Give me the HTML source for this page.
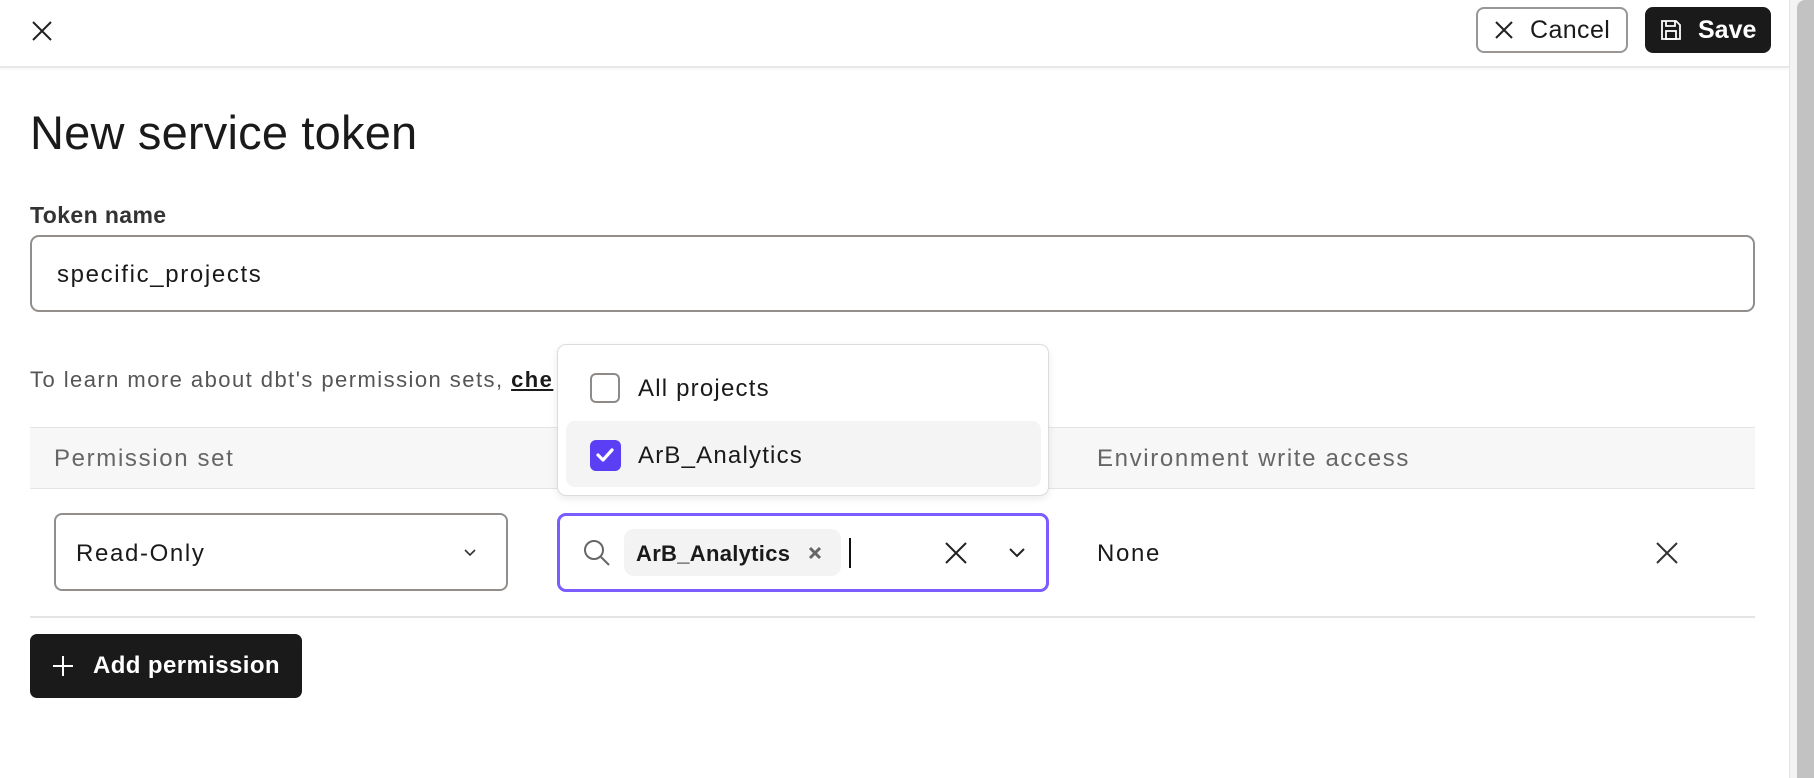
<!DOCTYPE html>
<html><head><meta charset="utf-8"><style>
*{box-sizing:border-box;margin:0;padding:0}
body{width:1814px;height:778px;overflow:hidden;background:#fff;font-family:"Liberation Sans",Arial,sans-serif;color:#1a1a1a;position:relative}
.abs{position:absolute}
.hdr{left:0;top:0;width:1789px;height:68px;border-bottom:2px solid #e8e8e8;box-shadow:0 1px 3px rgba(0,0,0,.05)}
.sb{left:1789px;top:0;width:25px;height:778px;background:#f3f3f3;border-left:1px solid #e2e2e2}
.thumb{left:1797px;top:0;width:17px;height:778px;background:#c2c2c2;border-radius:8px 0 0 0}
.btn{display:flex;align-items:center;font-size:25px;font-weight:bold;border-radius:8px}
.t{font-size:24px;letter-spacing:1.65px}
</style></head><body>
<div class="abs hdr"></div>
<div class="abs sb"></div><div class="abs thumb"></div>
<svg class="abs" style="left:31px;top:20px" width="22" height="22" viewBox="0 0 22 22"><path d="M2 2L20 20M20 2L2 20" stroke="#222" stroke-width="2"/></svg>
<div class="abs btn" style="left:1476px;top:7px;width:152px;height:46px;border:2px solid #9a9693;color:#1a1a1a">
<svg style="margin-left:16px" width="20" height="20" viewBox="0 0 20 20"><path d="M2 2L18 18M18 2L2 18" stroke="#222" stroke-width="2"/></svg><span style="margin-left:16px;font-weight:500;letter-spacing:.4px">Cancel</span></div>
<div class="abs btn" style="left:1645px;top:7px;width:126px;height:46px;background:#1a1a1a;color:#fff">
<svg style="margin-left:15px" width="22" height="22" viewBox="0 0 22 22" fill="none" stroke="#fff" stroke-width="1.8"><path d="M2 2h14l4 4v14H2z"/><path d="M6 2v5h9V2"/><rect x="6" y="12" width="10" height="8"/></svg><span style="margin-left:16px">Save</span></div>

<div class="abs" style="left:30px;top:105px;font-size:47px;font-weight:500;color:#1a1a1a;letter-spacing:.2px">New service token</div>
<div class="abs" style="left:30px;top:202px;font-size:23px;font-weight:bold;color:#333;letter-spacing:.4px">Token name</div>
<div class="abs" style="left:30px;top:235px;width:1725px;height:77px;border:2px solid #918e8c;border-radius:9px"></div>
<div class="abs t" style="left:57px;top:261px">specific_projects</div>
<div class="abs" style="left:30px;top:367px;font-size:22px;color:#555;letter-spacing:1.45px">To learn more about dbt's permission sets, <span style="color:#1a1a1a;font-weight:bold;text-decoration:underline">che</span></div>

<div class="abs" style="left:30px;top:427px;width:1725px;height:62px;background:#f7f7f7;border-top:1px solid #e4e4e4;border-bottom:1px solid #e4e4e4"></div>
<div class="abs t" style="left:54px;top:445px;color:#666">Permission set</div>
<div class="abs t" style="left:1097px;top:445px;color:#666">Environment write access</div>
<div class="abs" style="left:30px;top:616px;width:1725px;height:2px;background:#e4e4e4"></div>

<div class="abs" style="left:54px;top:513px;width:454px;height:78px;border:2px solid #918e8c;border-radius:8px"></div>
<div class="abs t" style="left:76px;top:540px;font-weight:500">Read-Only</div>
<svg class="abs" style="left:463px;top:548px" width="14" height="10" viewBox="0 0 14 10"><path d="M2 2l5 5 5-5" stroke="#333" stroke-width="1.6" fill="none"/></svg>

<div class="abs" style="left:557px;top:513px;width:492px;height:79px;border:3px solid #7a5cff;border-radius:9px"></div>
<svg class="abs" style="left:582px;top:538px" width="30" height="30" viewBox="0 0 30 30" fill="none" stroke="#666" stroke-width="2"><circle cx="12" cy="12" r="9"/><path d="M19 19l8 8"/></svg>
<div class="abs" style="left:624px;top:529px;width:217px;height:47px;background:#f3f3f3;border-radius:10px"></div>
<div class="abs" style="left:636px;top:541px;font-size:22px;font-weight:bold;letter-spacing:.3px">ArB_Analytics</div>
<svg class="abs" style="left:808px;top:546px" width="14" height="14" viewBox="0 0 14 14"><path d="M2 2l10 10M12 2L2 12" stroke="#666" stroke-width="3"/></svg>
<div class="abs" style="left:849px;top:538px;width:2px;height:30px;background:#111"></div>
<svg class="abs" style="left:945px;top:542px" width="22" height="22" viewBox="0 0 22 22"><path d="M1 1l20 20M21 1L1 21" stroke="#222" stroke-width="2"/></svg>
<svg class="abs" style="left:1008px;top:547px" width="18" height="12" viewBox="0 0 18 12"><path d="M2 2l7 7 7-7" stroke="#222" stroke-width="2" fill="none"/></svg>

<div class="abs t" style="left:1097px;top:540px">None</div>
<svg class="abs" style="left:1656px;top:542px" width="22" height="22" viewBox="0 0 22 22"><path d="M1 1l20 20M21 1L1 21" stroke="#333" stroke-width="2"/></svg>

<div class="abs btn" style="left:30px;top:634px;width:272px;height:64px;background:#1a1a1a;color:#fff;border-radius:7px;font-size:24px">
<svg style="margin-left:22px" width="22" height="22" viewBox="0 0 22 22"><path d="M11 1v20M1 11h20" stroke="#fff" stroke-width="2"/></svg><span style="margin-left:19px;letter-spacing:.4px">Add permission</span></div>

<div class="abs" style="left:557px;top:344px;width:492px;height:152px;background:#fff;border:1px solid #dcdcdc;border-radius:9px;box-shadow:0 3px 8px rgba(0,0,0,.08)"></div>
<div class="abs" style="left:590px;top:373px;width:30px;height:30px;border:2px solid #8e8a87;border-radius:6px"></div>
<div class="abs t" style="left:638px;top:375px;font-size:24px;letter-spacing:1.2px">All projects</div>
<div class="abs" style="left:566px;top:421px;width:475px;height:66px;background:#f4f4f4;border-radius:9px"></div>
<div class="abs" style="left:590px;top:440px;width:31px;height:31px;background:#5b3ff5;border-radius:6px"></div>
<svg class="abs" style="left:594px;top:445px" width="22" height="20" viewBox="0 0 22 20"><path d="M4 10l5 5 9-10" stroke="#fff" stroke-width="3.2" fill="none" stroke-linecap="round" stroke-linejoin="round"/></svg>
<div class="abs t" style="left:638px;top:442px;font-size:24px;letter-spacing:1.2px">ArB_Analytics</div>
</body></html>
